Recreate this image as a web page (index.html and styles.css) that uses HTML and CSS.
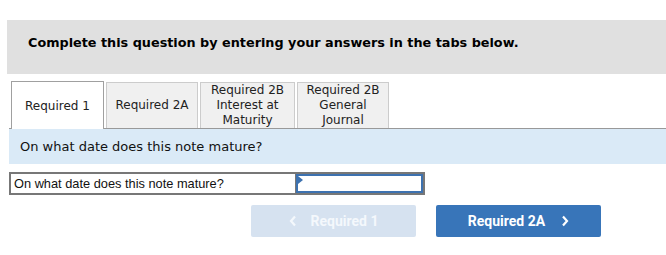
FILE: index.html
```html
<!DOCTYPE html>
<html>
	<head>
		<meta charset="utf-8">
		<title></title>
		<link rel="stylesheet" href="styles.css">
	</head>
	<body>
		<div class="intro">Complete this question by entering your answers in the tabs below.</div>
		<div class="tabs">
			<div class="tab on">Required 1</div>
			<div class="tab">Required 2A</div>
			<div class="tab">Required 2B<br>Interest at<br>Maturity</div>
			<div class="tab">Required 2B<br>General<br>Journal</div>
		</div>
		<div class="question">On what date does this note mature?</div>
		<div class="answer">
			<div class="label">On what date does this note mature?</div>
			<div class="field"><span class="mark"></span></div>
		</div>
		<div class="nav">
			<a href="javascript:;" class="btn prev"><svg class="arr" width="8" height="12" viewBox="0 0 8 12"><path d="M6 1.5 L2 6 L6 10.5" fill="none" stroke="currentColor" stroke-width="2.2"/></svg>Required 1</a>
			<a href="javascript:;" class="btn next">Required 2A<svg class="arr" width="8" height="12" viewBox="0 0 8 12"><path d="M2 1.5 L6 6 L2 10.5" fill="none" stroke="currentColor" stroke-width="2.2"/></svg></a>
		</div>
	</body>
</html>
```

FILE: styles.css
```css
* {margin:0; padding:0; box-sizing:border-box;}
body {font-family:"DejaVu Sans", Verdana, sans-serif; color:#000; background:#fff;}

.intro {margin:20px 0 0 7px; height:54px; background:#e0e0e0; padding-left:21px; line-height:46px; font-size:12.8px; font-weight:bold;}

.tabs {display:flex; align-items:flex-end; gap:2px; margin:7px 0 0 9px; padding-left:2px; height:48px; border-bottom:1px solid #999;}
.tab {width:92px; height:46px; background:#f0f0f0; border:1px solid #ccc; border-bottom:none; font-size:12px; line-height:15px; color:#222; text-align:center; display:flex; align-items:center; justify-content:center;}
.tab:nth-child(3) {width:95px;}
.tab.on {width:93px; height:48px; margin-bottom:-1px; background:#fff; border-color:#a0a0a0; padding-top:2px;}

.question {margin-left:9px; height:35px; background:#daeaf7; padding-left:11px; line-height:36px; font-size:13px; color:#111;}

.answer {display:flex; margin:8px 0 0 9px; height:23px;}
.label {width:287px; border:2px solid #777; border-right:1px solid #777; font-family:"Liberation Sans", Arial, sans-serif; font-size:12.8px; line-height:19px; padding-left:3px; color:#111;}
.field {position:relative; width:129px; border:2px solid #777; border-left:none; background:#fff;}
.field::before {content:""; position:absolute; left:0; top:0; right:0; bottom:0; border:2px solid #3d72b0;}
.mark {position:absolute; left:2px; top:2px; border-top:4px solid transparent; border-bottom:4px solid transparent; border-left:5px solid #3d72b0;}

.nav {display:flex; gap:20px; margin:10px 0 0 251px;}
.btn {width:165px; height:32px; border-radius:2px; display:flex; align-items:center; justify-content:center; font-family:Roboto, sans-serif; font-weight:bold; font-size:14px; color:#fff; text-decoration:none;}
.prev {background:#d6e2f0; color:#f4f8fc;}
.next {background:#3875b9;}
.prev .arr {margin-right:14px;}
.next .arr {margin-left:16px;}
```
